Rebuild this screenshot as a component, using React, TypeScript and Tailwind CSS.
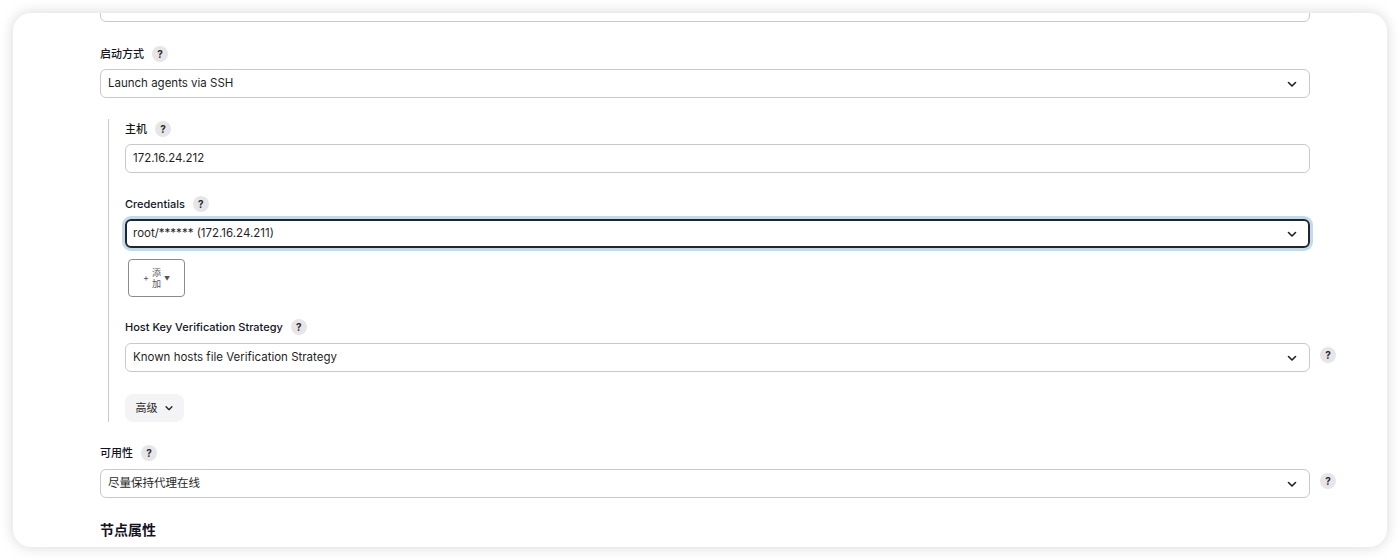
import React from 'react';

const font = "font-['Inter','Noto_Sans_CJK_SC',sans-serif]";

const Help = () => (
  <span className="inline-flex h-4 w-4 shrink-0 items-center justify-center rounded-full bg-[#e6e6e8] text-[10px] font-bold text-[#2a2a30]">
    ?
  </span>
);

const Chevron = ({ className = '' }: { className?: string }) => (
  <svg viewBox="0 0 12 12" className={className} fill="none" stroke="currentColor" strokeWidth="1.6" strokeLinecap="round" strokeLinejoin="round">
    <path d="M2.5 4.5 6 8l3.5-3.5" />
  </svg>
);

const Label = ({ text }: { text: string }) => (
  <div className="flex h-5 items-center gap-[8px] text-[11px] font-medium text-[#14141f]">
    <span>{text}</span>
    <Help />
  </div>
);

interface FieldProps {
  value: string;
  select?: boolean;
  focused?: boolean;
  width: string;
}

const Field = ({ value, select = false, focused = false, width }: FieldProps) => (
  <div
    className={`${width} flex h-[29px] shrink-0 items-center justify-between rounded-[6px] text-[11.5px] text-[#1f1f25] ${
      focused
        ? 'border-2 border-[#1f2630] pl-[6px] pr-[10px] shadow-[0_0_0_3px_#c4d9ea]'
        : 'border border-[#c9c9cc] pl-[7px] pr-[11px]'
    }`}
  >
    <span>{value}</span>
    {select && <Chevron className="h-3 w-3 text-[#1f1f25]" />}
  </div>
);

export default function App() {
  return (
    <div className={`h-[560px] w-[1400px] bg-white p-[13px] ${font}`}>
      <div className="h-[534px] overflow-hidden rounded-[18px] bg-white shadow-[0_0_14px_rgba(0,0,0,0.16)]">
        <div className="mt-[-20px] pl-[87px]">
          <Field value="" width="w-[1210px]" />

          <div className="mt-[22px]">
            <Label text="启动方式" />
            <div className="mt-[5px]">
              <Field value="Launch agents via SSH" select width="w-[1210px]" />
            </div>
          </div>

          <div className="ml-[8px] mt-[21px] flex w-[1202px] flex-col border-l border-[#c9c9cc] pl-[16px]">
            <div>
              <Label text="主机" />
              <div className="mt-[5px]">
                <Field value="172.16.24.212" width="w-[1185px]" />
              </div>
            </div>

            <div className="mt-[21px]">
              <Label text="Credentials" />
              <div className="mt-[5px]">
                <Field value="root/****** (172.16.24.211)" select focused width="w-[1185px]" />
              </div>
              <button className="ml-[3px] mt-[11px] flex h-[38px] w-[57px] items-center justify-center gap-[3px] rounded-[4px] border border-[#8a8a90] bg-white text-[#55555c]">
                <span className="text-[9px]">+</span>
                <span className="flex flex-col text-[9px] leading-[11px]">
                  <span>添</span>
                  <span>加</span>
                </span>
                <span className="text-[6px]">▼</span>
              </button>
            </div>

            <div className="mt-[20px]">
              <Label text="Host Key Verification Strategy" />
              <div className="mt-[6px] flex items-start">
                <Field value="Known hosts file Verification Strategy" select width="w-[1185px]" />
                <div className="ml-[10px] mt-[4px] flex">
                  <Help />
                </div>
              </div>
            </div>

            <div className="mt-[22px]">
              <button className="flex h-[28px] w-[59px] items-center justify-center gap-[6px] rounded-[8px] bg-[#f4f4f6] text-[11px] text-[#1f1f25]">
                <span>高级</span>
                <Chevron className="h-[10px] w-[10px]" />
              </button>
            </div>
          </div>

          <div className="mt-[21px]">
            <Label text="可用性" />
            <div className="mt-[6px] flex items-start">
              <Field value="尽量保持代理在线" select width="w-[1210px]" />
              <div className="ml-[10px] mt-[4px] flex">
                <Help />
              </div>
            </div>
          </div>

          <div className="mt-[21px] text-[14px] font-bold text-[#14141f]">节点属性</div>
        </div>
      </div>
    </div>
  );
}
